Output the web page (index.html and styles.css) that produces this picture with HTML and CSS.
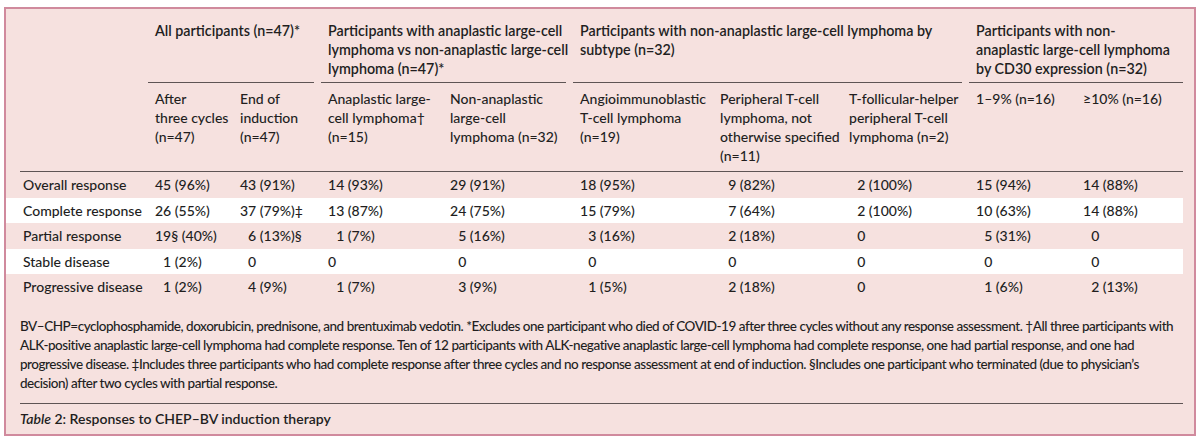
FILE: index.html
```html
<!DOCTYPE html>
<html>
<head>
<meta charset="utf-8">
<link rel="stylesheet" href="styles.css">
</head>
<body>
<div class="frame">
  <table class="tbl">
    <colgroup>
      <col class="c-sp"><col class="c-lab"><col class="c1"><col class="c2"><col class="c3"><col class="c4"><col class="c5"><col class="c6"><col class="c7"><col class="c8"><col class="c9">
    </colgroup>
    <thead>
      <tr class="groups">
        <th class="sp"></th>
        <th class="glab"></th>
        <th colspan="2" class="g"><div class="gh">All participants (n=47)*</div></th>
        <th colspan="2" class="g"><div class="gh">Participants with anaplastic large-cell<br>lymphoma vs non-anaplastic large-cell<br>lymphoma (n=47)*</div></th>
        <th colspan="3" class="g"><div class="gh">Participants with non-anaplastic large-cell lymphoma by<br>subtype (n=32)</div></th>
        <th colspan="2" class="g last"><div class="gh">Participants with non-<br>anaplastic large-cell lymphoma<br>by CD30 expression (n=32)</div></th>
      </tr>
      <tr class="subs">
        <td class="sp"></td>
        <td class="lab"></td>
        <td>After<br>three cycles<br>(n=47)</td>
        <td>End of<br>induction<br>(n=47)</td>
        <td>Anaplastic large-<br>cell lymphoma†<br>(n=15)</td>
        <td>Non-anaplastic<br>large-cell<br>lymphoma (n=32)</td>
        <td>Angioimmunoblastic<br>T-cell lymphoma<br>(n=19)</td>
        <td>Peripheral T-cell<br>lymphoma, not<br>otherwise specified<br>(n=11)</td>
        <td>T-follicular-helper<br>peripheral T-cell<br>lymphoma (n=2)</td>
        <td>1–9% (n=16)</td>
        <td>≥10% (n=16)</td>
      </tr>
    </thead>
    <tbody>
      <tr class="data">
        <td class="sp"></td>
        <td class="lab">Overall response</td>
        <td>45 (96%)</td><td>43 (91%)</td><td>14 (93%)</td><td>29 (91%)</td><td>18 (95%)</td><td>&#8199;9 (82%)</td><td>&#8199;2 (100%)</td><td>15 (94%)</td><td>14 (88%)</td>
      </tr>
      <tr class="data w">
        <td class="sp"></td>
        <td class="lab">Complete response</td>
        <td>26 (55%)</td><td>37 (79%)‡</td><td>13 (87%)</td><td>24 (75%)</td><td>15 (79%)</td><td>&#8199;7 (64%)</td><td>&#8199;2 (100%)</td><td>10 (63%)</td><td>14 (88%)</td>
      </tr>
      <tr class="data">
        <td class="sp"></td>
        <td class="lab">Partial response</td>
        <td>19§ (40%)</td><td>&#8199;6 (13%)§</td><td>&#8199;1 (7%)</td><td>&#8199;5 (16%)</td><td>&#8199;3 (16%)</td><td>&#8199;2 (18%)</td><td>&#8199;0</td><td>&#8199;5 (31%)</td><td>&#8199;0</td>
      </tr>
      <tr class="data w">
        <td class="sp"></td>
        <td class="lab">Stable disease</td>
        <td>&#8199;1 (2%)</td><td>&#8199;0</td><td>0</td><td>&#8199;0</td><td>&#8199;0</td><td>&#8199;0</td><td>&#8199;0</td><td>&#8199;0</td><td>&#8199;0</td>
      </tr>
      <tr class="data">
        <td class="sp"></td>
        <td class="lab">Progressive disease</td>
        <td>&#8199;1 (2%)</td><td>&#8199;4 (9%)</td><td>&#8199;1 (7%)</td><td>&#8199;3 (9%)</td><td>&#8199;1 (5%)</td><td>&#8199;2 (18%)</td><td>&#8199;0</td><td>&#8199;1 (6%)</td><td>&#8199;2 (13%)</td>
      </tr>
    </tbody>
  </table>
  <div class="notes">BV–CHP=cyclophosphamide, doxorubicin, prednisone, and brentuximab vedotin. *Excludes one participant who died of COVID-19 after three cycles without any response assessment. †All three participants with<br>ALK-positive anaplastic large-cell lymphoma had complete response. Ten of 12 participants with ALK-negative anaplastic large-cell lymphoma had complete response, one had partial response, and one had<br>progressive disease. ‡Includes three participants who had complete response after three cycles and no response assessment at end of induction. §Includes one participant who terminated (due to physician’s<br>decision) after two cycles with partial response.</div>
  <div class="caption"><i>Table</i> 2: Responses to CHEP–BV induction therapy</div>
</div>
</body>
</html>
```
FILE: styles.css
```css
* { box-sizing: border-box; }
body {
  margin: 0;
  background: #ffffff;
  font-family: Lato, "Noto Sans", sans-serif;
  font-size: 14px;
  line-height: 19px;
  color: #221e1e;
  font-weight: 500;
}
.frame {
  margin: 7px 4px 0;
  border: 2px solid #d08a9d;
  background: #f6e1df;
  padding: 0 0 6px 0;
}
.tbl {
  border-collapse: separate;
  border-spacing: 0;
  table-layout: fixed;
  width: 1177px;
}
.c-sp { width: 14px; }
.c-lab { width: 128px; }
.c1 { width: 85px; }
.c2 { width: 88px; }
.c3 { width: 122px; }
.c4 { width: 130px; }
.c5 { width: 140px; }
.c6 { width: 129px; }
.c7 { width: 127px; }
.c8 { width: 107px; }
.c9 { width: 107px; }
.tbl th, .tbl td {
  white-space: nowrap;
  text-align: left;
  vertical-align: top;
}
.groups th {
  padding: 12px 7px 0 0;
  font-weight: 600;
  font-size: 14.3px;
}
.groups th.sp, .groups th.glab { padding: 0; }
.groups th.last { padding-right: 0; }
.gh {
  height: 62px;
  padding: 0 0 4px 7px;
  border-bottom: 1px solid #5e5454;
}
.subs td {
  padding: 6px 0 6px 7px;
  border-bottom: 1px solid #5e5454;
}
.subs td.sp { border-bottom: none; padding: 0; }
.subs td.lab { padding-left: 3px; }
.data td {
  height: 25.5px;
  padding: 0 0 0 7px;
  vertical-align: middle;
}
.data td.sp { padding: 0; }
.data td.lab { padding-left: 3px; }
.data.w td { background: #ffffff; }
.notes {
  margin: 17px 0 0 14px;
  width: 1163px;
  padding-bottom: 10px;
  border-bottom: 1px solid #5e5454;
  white-space: nowrap;
  font-size: 13.5px;
  letter-spacing: -0.47px;
}
.caption {
  margin-left: 14px;
  padding-top: 5px;
  font-weight: 600;
  font-size: 14px;
}
```
